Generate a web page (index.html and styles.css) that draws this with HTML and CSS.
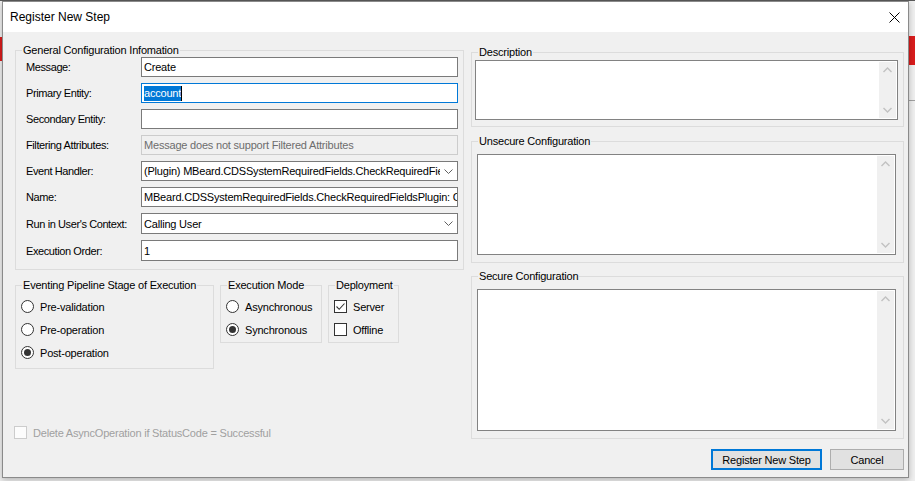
FILE: index.html
```html
<!DOCTYPE html>
<html lang="en">
<head>
    <meta charset="UTF-8">
    <title>Register New Step</title>
    <link rel="stylesheet" href="styles.css">
</head>
<body>
<div class="dialog">
    <div class="titleBar">
        <span class="titleText">Register New Step</span>
        <svg class="closeIcon" width="11" height="11" viewBox="0 0 11 11">
            <path d="M0.5 0.5 L10.5 10.5 M10.5 0.5 L0.5 10.5" stroke="#000" stroke-width="1" fill="none"/>
        </svg>
    </div>

    <div class="dialogBody">
        <div class="leftCol">
            <fieldset class="group">
                <legend>General Configuration Infomation</legend>
                <div class="formGrid">
                    <div class="fieldLabel">Message:</div>
                    <div class="textBox">Create</div>

                    <div class="fieldLabel">Primary Entity:</div>
                    <div class="textBox focused"><span class="selected">account</span><span class="caret"></span></div>

                    <div class="fieldLabel">Secondary Entity:</div>
                    <div class="textBox"></div>

                    <div class="fieldLabel">Filtering Attributes:</div>
                    <div class="textBox disabled">Message does not support Filtered Attributes</div>

                    <div class="fieldLabel">Event Handler:</div>
                    <div class="comboBox">
                        <span class="comboText">(Plugin) MBeard.CDSSystemRequiredFields.CheckRequiredFieldsPlugin</span>
                        <svg class="comboArrow" width="9" height="5" viewBox="0 0 9 5"><path d="M0.5 0.5 L4.5 4.5 L8.5 0.5" stroke="#606060" fill="none"/></svg>
                    </div>

                    <div class="fieldLabel">Name:</div>
                    <div class="textBox">MBeard.CDSSystemRequiredFields.CheckRequiredFieldsPlugin: Create of account</div>

                    <div class="fieldLabel">Run in User's Context:</div>
                    <div class="comboBox">
                        <span class="comboText">Calling User</span>
                        <svg class="comboArrow" width="9" height="5" viewBox="0 0 9 5"><path d="M0.5 0.5 L4.5 4.5 L8.5 0.5" stroke="#606060" fill="none"/></svg>
                    </div>

                    <div class="fieldLabel">Execution Order:</div>
                    <div class="textBox">1</div>
                </div>
            </fieldset>

            <div class="optionGroups">
                <fieldset class="group stageGroup">
                    <legend>Eventing Pipeline Stage of Execution</legend>
                    <div class="optionList">
                        <div class="option"><span class="radio"></span>Pre-validation</div>
                        <div class="option"><span class="radio"></span>Pre-operation</div>
                        <div class="option"><span class="radio checked"></span>Post-operation</div>
                    </div>
                </fieldset>

                <fieldset class="group modeGroup">
                    <legend>Execution Mode</legend>
                    <div class="optionList">
                        <div class="option"><span class="radio"></span>Asynchronous</div>
                        <div class="option"><span class="radio checked"></span>Synchronous</div>
                    </div>
                </fieldset>

                <fieldset class="group deployGroup">
                    <legend>Deployment</legend>
                    <div class="optionList">
                        <div class="option">
                            <span class="checkBox">
                                <svg width="11" height="11" viewBox="0 0 11 11"><path d="M1.5 5.5 L4.2 8.3 L9.5 2.5" stroke="#333" stroke-width="1.1" fill="none"/></svg>
                            </span>Server
                        </div>
                        <div class="option"><span class="checkBox"></span>Offline</div>
                    </div>
                </fieldset>
            </div>

            <div class="deleteRow">
                <span class="checkBox disabledBox"></span>Delete AsyncOperation if StatusCode = Successful
            </div>
        </div>

        <div class="rightCol">
            <fieldset class="group descGroup">
                <legend>Description</legend>
                <div class="memo descMemo">
                    <div class="memoScroll">
                        <svg width="17" height="17" viewBox="0 0 17 17"><path d="M4.5 10 L8.5 6 L12.5 10" stroke="#c2c2c2" stroke-width="1.4" fill="none"/></svg>
                        <svg width="17" height="17" viewBox="0 0 17 17"><path d="M4.5 7 L8.5 11 L12.5 7" stroke="#c2c2c2" stroke-width="1.4" fill="none"/></svg>
                    </div>
                </div>
            </fieldset>

            <fieldset class="group configGroup">
                <legend>Unsecure Configuration</legend>
                <div class="memo unsecureMemo">
                    <div class="memoScroll">
                        <svg width="17" height="17" viewBox="0 0 17 17"><path d="M4.5 10 L8.5 6 L12.5 10" stroke="#c2c2c2" stroke-width="1.4" fill="none"/></svg>
                        <svg width="17" height="17" viewBox="0 0 17 17"><path d="M4.5 7 L8.5 11 L12.5 7" stroke="#c2c2c2" stroke-width="1.4" fill="none"/></svg>
                    </div>
                </div>
            </fieldset>

            <fieldset class="group configGroup secureGroup">
                <legend>Secure Configuration</legend>
                <div class="memo secureMemo">
                    <div class="memoScroll">
                        <svg width="17" height="17" viewBox="0 0 17 17"><path d="M4.5 10 L8.5 6 L12.5 10" stroke="#c2c2c2" stroke-width="1.4" fill="none"/></svg>
                        <svg width="17" height="17" viewBox="0 0 17 17"><path d="M4.5 7 L8.5 11 L12.5 7" stroke="#c2c2c2" stroke-width="1.4" fill="none"/></svg>
                    </div>
                </div>
            </fieldset>
        </div>

        <div class="buttonRow">
            <button class="dlgBtn defaultBtn">Register New Step</button>
            <button class="dlgBtn cancelBtn">Cancel</button>
        </div>
    </div>
</div>
</body>
</html>
```

FILE: styles.css
```css
* {
    box-sizing: border-box;
}

body {
    margin: 0;
    width: 915px;
    height: 481px;
    overflow: hidden;
    /* bits of the window behind the dialog */
    background:
        linear-gradient(#d91c1c, #d91c1c) 0 37px / 2px 24px no-repeat,
        linear-gradient(#d91c1c, #d91c1c) 909px 36px / 6px 29px no-repeat,
        linear-gradient(#a0a0a0, #a0a0a0) 909px 100px / 6px 1px no-repeat,
        linear-gradient(#5a5a5a, #5a5a5a) 0 0 / 915px 1px no-repeat,
        #efefef;
    font-family: "Liberation Sans", Arial, sans-serif;
    font-size: 11px;
    letter-spacing: -0.2px;
    color: #000;
}

.dialog {
    margin: 1px 0 0 2px;
    width: 907px;
    height: 477px;
    border: 1px solid #8a8a8a;
    background-color: #f0f0f0;
    display: flex;
    flex-direction: column;
    box-shadow: 0 2px 6px rgba(0, 0, 0, 0.25);
}

.titleBar {
    height: 30px;
    flex-shrink: 0;
    background-color: #ffffff;
    display: flex;
    align-items: center;
    justify-content: space-between;
    padding: 0 8px 0 7px;
}

.titleText {
    font-size: 12px;
    letter-spacing: 0;
}

.closeIcon {
    display: block;
}

.dialogBody {
    flex: 1;
    display: grid;
    grid-template-columns: 449px 433px;
    grid-template-rows: 1fr 21px;
    column-gap: 7px;
    row-gap: 10px;
    padding: 12px 4px 7px 12px;
}

/* group boxes */
.group {
    margin: 0;
    padding: 0;
    min-width: 0;
    border: 1px solid #dcdcdc;
}

.group legend {
    margin-left: 6px;
    padding: 0 1px;
    line-height: 13px;
}

.leftCol {
    display: flex;
    flex-direction: column;
}

.formGrid {
    display: grid;
    grid-template-columns: 115px 1fr;
    grid-template-rows: repeat(6, 20px) 21px 21px;
    row-gap: 6px;
    padding: 0 5px 8px 10px;
}

.fieldLabel {
    display: flex;
    align-items: center;
    letter-spacing: -0.4px;
    white-space: nowrap;
}

.textBox,
.comboBox {
    border: 1px solid #7a7a7a;
    background-color: #ffffff;
    padding: 0 2px;
    display: flex;
    align-items: center;
    white-space: nowrap;
    overflow: hidden;
}

.textBox.focused {
    border-color: #0078d7;
}

.textBox.disabled {
    border-color: #cccccc;
    background-color: #f0f0f0;
    color: #6d6d6d;
}

.selected {
    background-color: #0078d7;
    color: #ffffff;
    line-height: 15px;
}

.caret {
    width: 1px;
    height: 15px;
    background-color: #000;
}

.comboText {
    flex: 1;
    overflow: hidden;
    white-space: nowrap;
}

.comboArrow {
    flex-shrink: 0;
    margin: 0 2px 0 4px;
}

/* radio / check groups */
.optionGroups {
    display: flex;
    align-items: flex-start;
    gap: 6px;
    margin-top: 9px;
}

.stageGroup {
    width: 199px;
}

.modeGroup {
    width: 102px;
}

.deployGroup {
    width: 71px;
}

.optionList {
    padding: 3px 5px 1px;
}

.stageGroup .optionList {
    padding-bottom: 4px;
}

.option {
    height: 23px;
    display: flex;
    align-items: center;
    gap: 6px;
    white-space: nowrap;
}

.radio {
    width: 13px;
    height: 13px;
    border: 1px solid #333333;
    border-radius: 50%;
    background-color: #ffffff;
    display: flex;
    align-items: center;
    justify-content: center;
}

.radio.checked::after {
    content: "";
    width: 7px;
    height: 7px;
    border-radius: 50%;
    background-color: #333333;
}

.checkBox {
    width: 13px;
    height: 13px;
    border: 1px solid #333333;
    background-color: #ffffff;
    display: flex;
    align-items: center;
    justify-content: center;
}

.checkBox svg {
    display: block;
}

.deleteRow {
    margin-top: auto;
    margin-left: -1px;
    height: 13px;
    display: flex;
    align-items: center;
    gap: 6px;
    color: #a0a0a0;
}

.disabledBox {
    border-color: #cccccc;
    background-color: #fcfcfc;
}

/* multiline boxes */
.rightCol {
    display: flex;
    flex-direction: column;
    padding-top: 2px;
}

.configGroup {
    margin-top: 8px;
}

.secureGroup {
    margin-top: 7px;
}

.memo {
    border: 1px solid #828282;
    background-color: #ffffff;
    padding: 1px;
    display: flex;
    justify-content: flex-end;
}

.descMemo {
    height: 60px;
    margin: 1px 5px 6px 3px;
}

.unsecureMemo {
    height: 101px;
    margin: 6px 7px 7px 5px;
}

.secureMemo {
    height: 142px;
    margin: 6px 7px 7px 5px;
}

.memoScroll {
    width: 17px;
    background-color: #f0f0f0;
    display: flex;
    flex-direction: column;
    justify-content: space-between;
}

.memoScroll svg {
    display: block;
}

/* bottom buttons */
.buttonRow {
    grid-column: 1 / -1;
    display: flex;
    justify-content: flex-end;
    gap: 8px;
}

.dlgBtn {
    height: 21px;
    margin: 0;
    padding: 0;
    background-color: #e1e1e1;
    border: 1px solid #adadad;
    font-family: "Liberation Sans", Arial, sans-serif;
    font-size: 11px;
    letter-spacing: -0.2px;
    color: #000;
}

.defaultBtn {
    width: 111px;
    border: 2px solid #0078d7;
}

.cancelBtn {
    width: 74px;
}
```
